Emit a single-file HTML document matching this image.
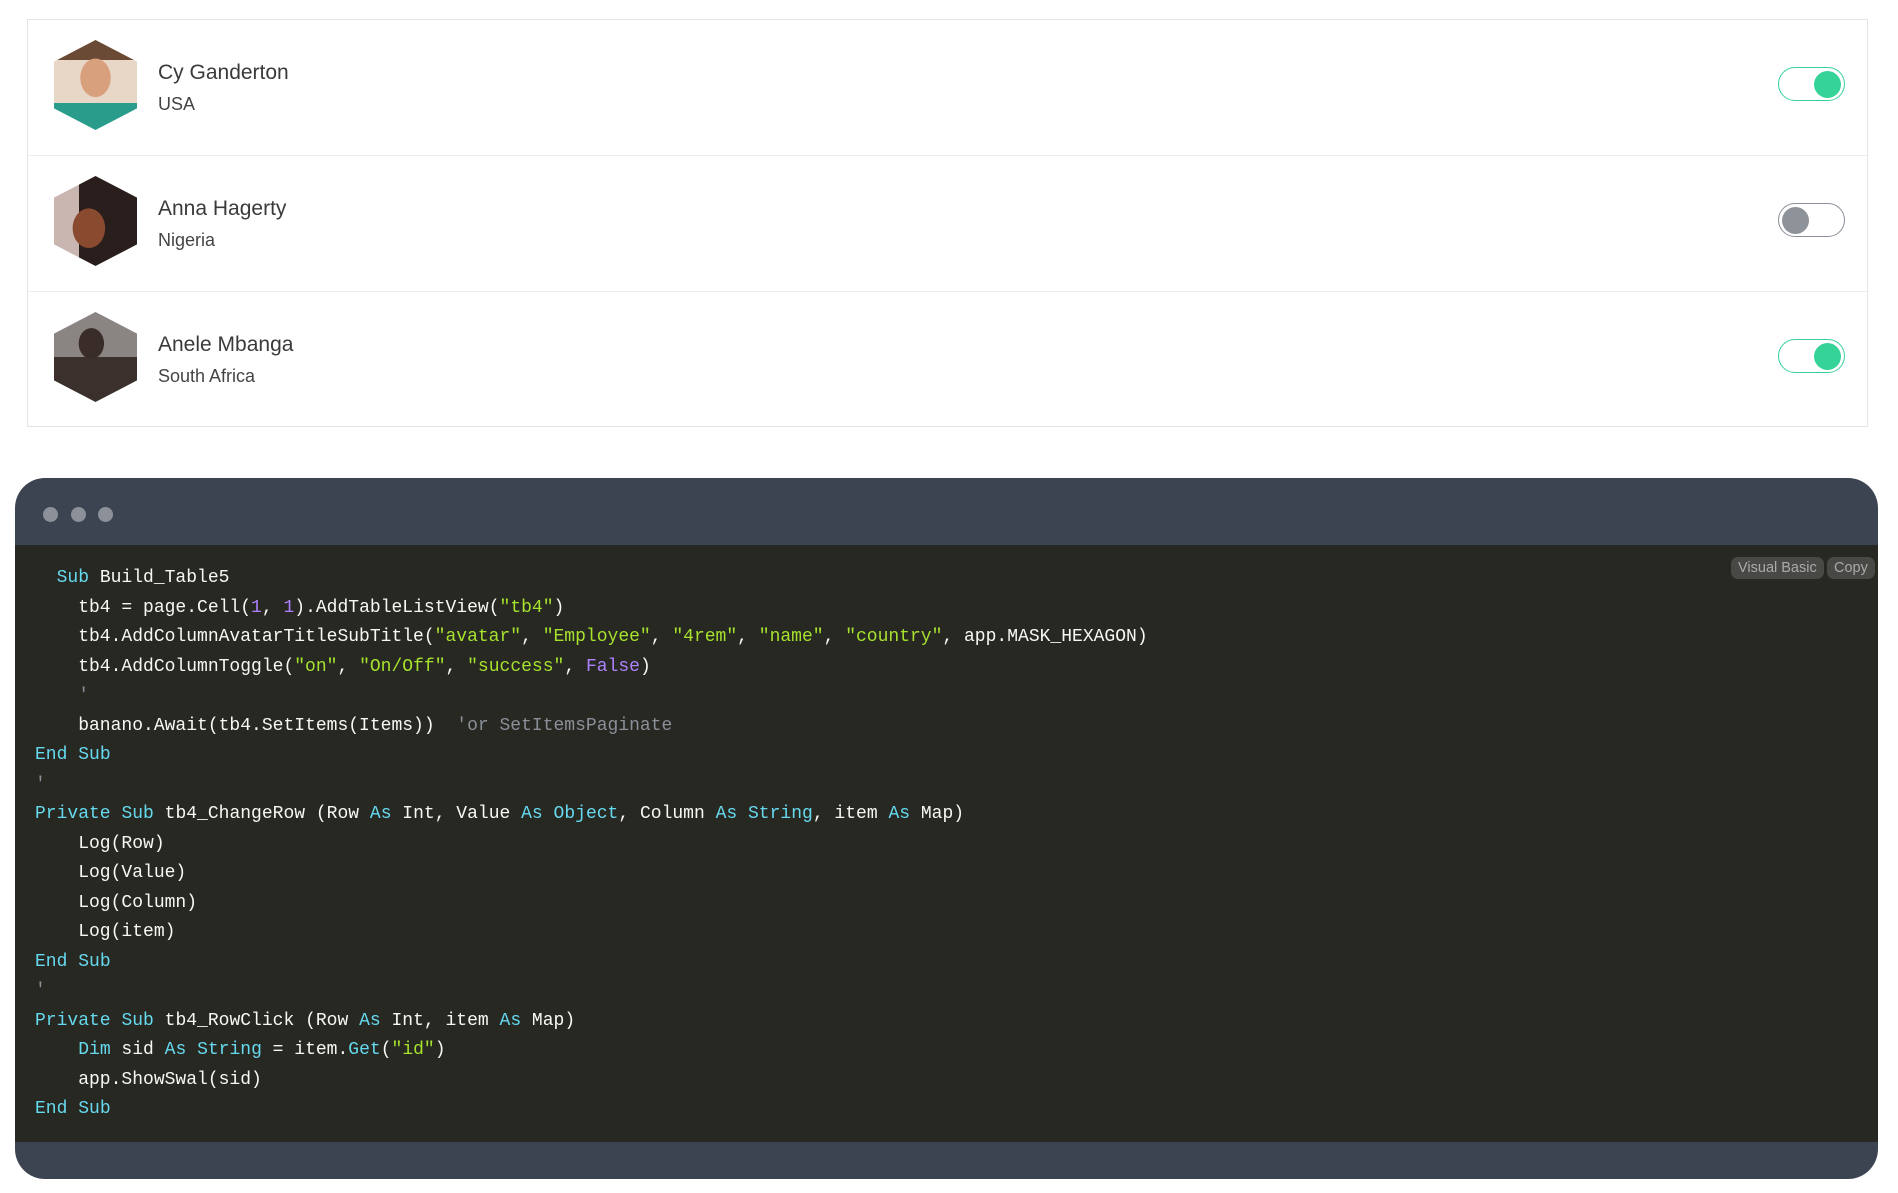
<!DOCTYPE html>
<html><head><meta charset="utf-8"><style>
*{margin:0;padding:0;box-sizing:border-box}
body{width:1898px;height:1193px;background:#fff;position:relative;overflow:hidden;font-family:"Liberation Sans",sans-serif}
.card{position:absolute;left:27px;top:19px;width:1841px;height:408px;border:1px solid #e4e4e4}
.row{position:absolute;left:0;width:100%;height:136px;border-bottom:1px solid #eee}
.row:last-child{border-bottom:none}
.hex{position:absolute;left:26px;top:20px;width:83px;height:90px;clip-path:polygon(50% 0,100% 24%,100% 76%,50% 100%,0 76%,0 24%);border-radius:8px}
.name{position:absolute;left:130px;top:41px;font-size:21px;color:#3a3a3a}
.sub{position:absolute;left:130px;top:74px;font-size:18px;color:#444}
.tg{position:absolute;left:1750px;top:47px;width:67px;height:34px;border-radius:17px;border:1.5px solid #36d399;background:#fff}
.tg i{position:absolute;top:2.5px;width:27px;height:27px;border-radius:50%;background:#36d399;right:3px}
.tg.off{border-color:#8c9099}
.tg.off i{background:#8e9299;left:3px;right:auto}
.code{position:absolute;left:15px;top:478px;width:1863px;height:701px;background:#3d4451;border-radius:30px;overflow:hidden}
.dot{position:absolute;top:29px;width:15px;height:15px;border-radius:50%;background:#8b9099}
.body{position:absolute;left:0;top:67px;width:100%;height:597px;background:#272822}
pre{position:absolute;left:20px;top:19px;font-family:"Liberation Mono",monospace;font-size:18px;line-height:29.5px;color:#f8f8f2}
.k{color:#66d9ef}.s{color:#a6e22e}.n{color:#ae81ff}.c{color:#8a8f98}
.b{position:absolute;top:12px;height:22px;background:#484844;color:#aaa;font-size:14.5px;line-height:22px;padding:0 7px;border-radius:7px}
</style></head><body>
<div class="card">
 <div class="row" style="top:0">
  <div class="hex" style="background:radial-gradient(ellipse 30% 35% at 50% 42%,#d9a07e 60%,transparent 62%),linear-gradient(180deg,#6a4a35 0 22%,#e8d6c6 22% 70%,#2a9c8c 70%)"></div>
  <div class="name">Cy Ganderton</div><div class="sub">USA</div>
  <div class="tg"><i></i></div>
 </div>
 <div class="row" style="top:136px">
  <div class="hex" style="background:radial-gradient(ellipse 32% 36% at 42% 58%,#8a4a30 60%,transparent 62%),linear-gradient(90deg,#c9b6b0 0 30%,#2a1e1c 30%)"></div>
  <div class="name">Anna Hagerty</div><div class="sub">Nigeria</div>
  <div class="tg off"><i></i></div>
 </div>
 <div class="row" style="top:272px">
  <div class="hex" style="background:radial-gradient(ellipse 25% 28% at 45% 35%,#3a2c28 60%,transparent 62%),linear-gradient(180deg,#8a8482 0 50%,#3c302c 50%)"></div>
  <div class="name">Anele Mbanga</div><div class="sub">South Africa</div>
  <div class="tg"><i></i></div>
 </div>
</div>
<div class="code">
 <div class="dot" style="left:28px"></div><div class="dot" style="left:56px"></div><div class="dot" style="left:83px"></div>
 <div class="body">
  <div class="b" style="left:1716px">Visual Basic</div><div class="b" style="left:1812px">Copy</div>
<pre>  <span class="k">Sub</span> Build_Table5
    tb4 = page.Cell(<span class="n">1</span>, <span class="n">1</span>).AddTableListView(<span class="s">"tb4"</span>)
    tb4.AddColumnAvatarTitleSubTitle(<span class="s">"avatar"</span>, <span class="s">"Employee"</span>, <span class="s">"4rem"</span>, <span class="s">"name"</span>, <span class="s">"country"</span>, app.MASK_HEXAGON)
    tb4.AddColumnToggle(<span class="s">"on"</span>, <span class="s">"On/Off"</span>, <span class="s">"success"</span>, <span class="n">False</span>)
    <span class="c">'</span>
    banano.Await(tb4.SetItems(Items))  <span class="c">'or SetItemsPaginate</span>
<span class="k">End</span> <span class="k">Sub</span>
<span class="c">'</span>
<span class="k">Private</span> <span class="k">Sub</span> tb4_ChangeRow (Row <span class="k">As</span> Int, Value <span class="k">As</span> <span class="k">Object</span>, Column <span class="k">As</span> <span class="k">String</span>, item <span class="k">As</span> Map)
    Log(Row)
    Log(Value)
    Log(Column)
    Log(item)
<span class="k">End</span> <span class="k">Sub</span>
<span class="c">'</span>
<span class="k">Private</span> <span class="k">Sub</span> tb4_RowClick (Row <span class="k">As</span> Int, item <span class="k">As</span> Map)
    <span class="k">Dim</span> sid <span class="k">As</span> <span class="k">String</span> = item.<span class="k">Get</span>(<span class="s">"id"</span>)
    app.ShowSwal(sid)
<span class="k">End</span> <span class="k">Sub</span></pre>
 </div>
</div>
</body></html>
